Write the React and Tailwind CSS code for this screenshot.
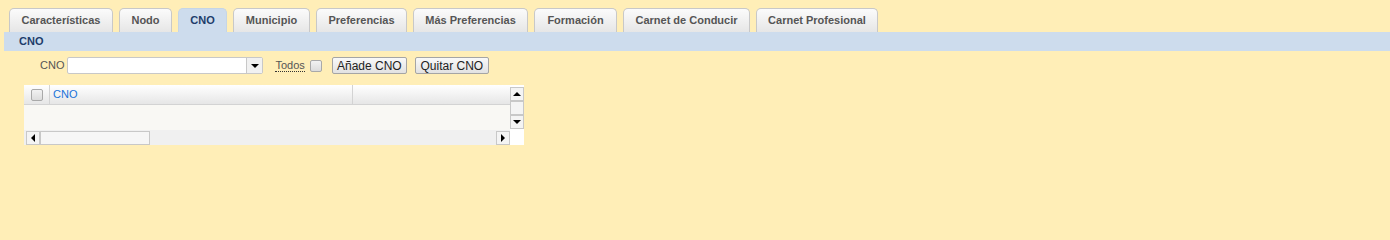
import React from 'react';

const tabs = [
  { label: 'Características', w: 'w-[104px]' },
  { label: 'Nodo', w: 'w-[53px]' },
  { label: 'CNO', w: 'w-[49px]', active: true },
  { label: 'Municipio', w: 'w-[77px]' },
  { label: 'Preferencias', w: 'w-[91px]' },
  { label: 'Más Preferencias', w: 'w-[115px]' },
  { label: 'Formación', w: 'w-[83px]' },
  { label: 'Carnet de Conducir', w: 'w-[127px]' },
  { label: 'Carnet Profesional', w: 'w-[122px]' },
];

const Arrow = ({ dir }) => {
  const pts = {
    up: '0,6 4,2 8,6',
    down: '0,2 4,6 8,2',
    left: '6,0 2,4 6,8',
    right: '2,0 6,4 2,8',
  };
  return (
    <svg width="8" height="8" viewBox="0 0 8 8">
      <polygon points={pts[dir]} fill="#000" />
    </svg>
  );
};

const ScrollBtn = ({ dir }) => (
  <div className="w-[14px] h-[14px] bg-[#f4f4f4] border border-[#c8c8c8] flex items-center justify-center">
    <Arrow dir={dir} />
  </div>
);

const Checkbox = () => (
  <div className="w-[12px] h-[12px] rounded-[2px] border border-[#a9a9a9] bg-gradient-to-b from-[#f2f2f2] to-[#dcdcdc]" />
);

export default function App() {
  return (
    <div className="w-full min-h-screen bg-[#ffeeb7] font-['Liberation_Sans',Arial,sans-serif] overflow-hidden">
      <div className="flex gap-[6px] pl-[9px] pt-[8px]">
        {tabs.map((t) => (
          <div
            key={t.label}
            className={`${t.w} h-[24px] rounded-t-[5px] border border-b-0 flex items-center justify-center text-[11px] font-bold ${
              t.active
                ? 'bg-[#cddced] border-[#c5d5e6] text-[#1d3c6b]'
                : 'bg-gradient-to-b from-[#fbfbfb] to-[#e6e6e6] border-[#c8c8c8] text-[#555]'
            }`}
          >
            {t.label}
          </div>
        ))}
      </div>
      <div className="ml-[4px] h-[19px] bg-[#cddced] flex items-center pl-[15px] text-[11px] font-bold text-[#1d3c6b]">
        CNO
      </div>

      <div className="flex items-center mt-[6px] h-[17px] text-[11px] text-[#555]">
        <span className="ml-[40px] mr-[3px]">CNO</span>
        <div className="w-[196px] h-[17px] bg-white border border-[#c8c8c8] rounded-[2px] flex justify-end">
          <div className="w-[16px] h-full border-l border-[#c8c8c8] bg-[#f1f1f1] flex items-center justify-center">
            <Arrow dir="down" />
          </div>
        </div>
        <span className="ml-[12px] border-b border-dotted border-[#333] leading-[12px]">Todos</span>
        <div className="ml-[5px]">
          <Checkbox />
        </div>
        <button className="ml-[10px] w-[75px] h-[17px] border border-[#a5a5a5] rounded-[2px] bg-gradient-to-b from-[#f9f9f9] to-[#e2e2e2] text-[12px] text-[#222] leading-none">
          Añade CNO
        </button>
        <button className="ml-[8px] w-[74px] h-[17px] border border-[#a5a5a5] rounded-[2px] bg-gradient-to-b from-[#f9f9f9] to-[#e2e2e2] text-[12px] text-[#222] leading-none">
          Quitar CNO
        </button>
      </div>

      <div className="ml-[24px] mt-[11px] w-[500px] h-[60px] bg-white flex flex-col">
        <div className="flex h-[45px]">
          <div className="flex-1 flex flex-col bg-[#f9f8f4]">
            <div className="h-[20px] flex border-b border-[#d3d3d3] bg-gradient-to-b from-white to-[#e6e6e6]">
              <div className="w-[26px] flex items-center justify-center border-r border-[#d3d3d3]">
                <Checkbox />
              </div>
              <div className="w-[303px] flex items-center pl-[3px] text-[11px] text-[#1a73d9] border-r border-[#d3d3d3]">
                CNO
              </div>
            </div>
          </div>
          <div className="w-[14px] pt-[2px] flex flex-col bg-white">
            <ScrollBtn dir="up" />
            <div className="w-[14px] h-[14px] bg-[#f4f4f4] border border-[#c8c8c8]" />
            <ScrollBtn dir="down" />
          </div>
        </div>
        <div className="flex h-[15px]">
          <div className="w-[486px] bg-[#f0f0f0] flex items-center pl-[2px]">
            <ScrollBtn dir="left" />
            <div className="w-[110px] h-[14px] bg-[#f6f6f6] border border-[#c8c8c8]" />
            <div className="flex-1" />
            <ScrollBtn dir="right" />
          </div>
          <div className="flex-1 bg-white" />
        </div>
      </div>
    </div>
  );
}
